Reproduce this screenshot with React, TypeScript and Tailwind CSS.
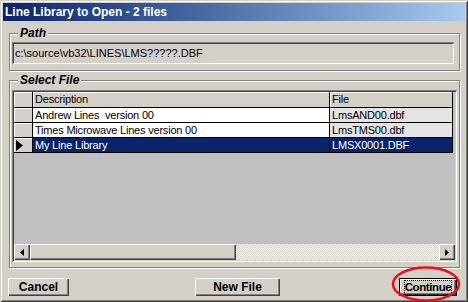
import { Fragment } from "react";

const raised =
  "shadow-[inset_1px_1px_0_#ffffff,inset_-1px_-1px_0_#404040,inset_-2px_-2px_0_#808080]";
const sunken =
  "shadow-[inset_1px_1px_0_#808080,inset_-1px_-1px_0_#ffffff,inset_2px_2px_0_#404040,inset_-2px_-2px_0_#d4d0c8]";
const etched = "border border-[#808080] shadow-[inset_1px_1px_0_#ffffff,1px_1px_0_#ffffff]";
const sans = "font-['Liberation_Sans',Arial,sans-serif]";

const rows = [
  { desc: "Andrew Lines  version 00", file: "LmsAND00.dbf", selected: false },
  { desc: "Times Microwave Lines version 00", file: "LmsTMS00.dbf", selected: false },
  { desc: "My Line Library", file: "LMSX0001.DBF", selected: true },
];

const GroupBox = ({ title, className, children }: { title: string; className: string; children: React.ReactNode }) => (
  <div className={`relative ml-[6px] w-[451px] ${etched} ${className}`}>
    <span className="absolute left-[8px] -top-[8px] bg-[#d4d0c8] px-[2px] text-[12px] leading-[14px] font-bold italic text-black">
      {title}
    </span>
    {children}
  </div>
);

const Arrow = ({ dir }: { dir: "left" | "right" }) => (
  <svg width="4" height="7" viewBox="0 0 4 7">
    {dir === "left" ? <polygon points="4,0 0,3.5 4,7" fill="#000" /> : <polygon points="0,0 4,3.5 0,7" fill="#000" />}
  </svg>
);

export default function App() {
  return (
    <div
      className={`relative flex h-[302px] w-[468px] flex-col bg-[#d4d0c8] p-[3px] ${sans} shadow-[inset_1px_1px_0_#d4d0c8,inset_-1px_-1px_0_#404040,inset_2px_2px_0_#ffffff,inset_-2px_-2px_0_#808080]`}
    >
      {/* caption */}
      <div className="flex h-[18px] items-center bg-linear-to-r from-[#0a246a] to-[#a6caf0] pl-[2px] text-[12px] font-bold text-white">
        Line Library to Open - 2 files
      </div>

      <GroupBox title="Path" className="mt-[12px] h-[38px] pl-[2px] pt-[8px]">
        <div className={`flex h-[22px] w-[442px] items-center pl-[3px] text-[11px] text-black ${sunken}`}>
          c:\source\vb32\LINES\LMS?????.DBF
        </div>
      </GroupBox>

      <GroupBox title="Select File" className="mt-[9px] h-[188px] pl-[2px] pt-[9px]">
        <div className={`flex h-[172px] w-[445px] flex-col bg-[#c0c0c0] p-[2px] text-[11px] ${sunken}`}>
          <div className="grid grid-cols-[19px_297px_123px] tracking-[-0.2px]">
            <div className="h-[16px] border-r border-b border-black bg-[#d4d0c8] shadow-[inset_1px_1px_0_#ffffff]" />
            <div className="flex h-[16px] items-center border-r border-b border-black bg-[#d4d0c8] pl-[2px] shadow-[inset_1px_1px_0_#ffffff]">
              Description
            </div>
            <div className="flex h-[16px] items-center border-r border-b border-black bg-[#d4d0c8] pl-[2px] shadow-[inset_1px_1px_0_#ffffff]">
              File
            </div>
            {rows.map((r) => (
              <Fragment key={r.file}>
                <div className="flex h-[15px] items-center border-r border-b border-black bg-[#d4d0c8] pl-[2px] shadow-[inset_1px_1px_0_#ffffff]">
                  {r.selected && (
                    <svg width="7" height="11" viewBox="0 0 7 11">
                      <polygon points="0,0 7,5.5 0,11" fill="#000" />
                    </svg>
                  )}
                </div>
                <div
                  className={`flex h-[15px] items-center whitespace-pre border-r border-b border-black pl-[2px] ${
                    r.selected ? "bg-[#0a246a] text-white" : "bg-white text-black"
                  }`}
                >
                  {r.desc}
                </div>
                <div
                  className={`flex h-[15px] items-center border-r border-b border-black pl-[2px] ${
                    r.selected ? "bg-[#0a246a] text-white" : "bg-[#e4e4e4] text-black"
                  }`}
                >
                  {r.file}
                </div>
              </Fragment>
            ))}
          </div>
          <div className="flex-1" />
          {/* horizontal scrollbar */}
          <div className="flex h-[16px]">
            <div className={`flex w-[16px] items-center justify-center bg-[#d4d0c8] ${raised}`}>
              <Arrow dir="left" />
            </div>
            <div className={`w-[206px] bg-[#d4d0c8] ${raised}`} />
            <div className="flex-1 bg-[repeating-conic-gradient(#ffffff_0%_25%,#d4d0c8_0%_50%)] bg-[length:2px_2px]" />
            <div className={`flex w-[16px] items-center justify-center bg-[#d4d0c8] ${raised}`}>
              <Arrow dir="right" />
            </div>
          </div>
        </div>
      </GroupBox>

      <div className="mt-[10px] flex pl-[5px] pr-[8px] text-[12px] font-bold text-black">
        <div className={`flex h-[18px] w-[61px] items-center justify-center bg-[#d4d0c8] ${raised}`}>Cancel</div>
        <div className={`ml-[126px] flex h-[18px] w-[85px] items-center justify-center bg-[#d4d0c8] ${raised}`}>
          New File
        </div>
        <div className="ml-auto flex h-[18px] w-[58px] items-center justify-center border border-black bg-[#d4d0c8]">
          <div className={`flex h-full w-full items-center justify-center ${raised}`}>
            <span className="text-[11.5px] leading-[13px] tracking-[-0.4px] outline-1 outline-dotted outline-black">
              Continue
            </span>
          </div>
        </div>
      </div>

      {/* red annotation ring */}
      <svg className="absolute left-[390px] top-[265px]" width="74" height="38" viewBox="0 0 74 38">
        <ellipse cx="36" cy="19" rx="33" ry="16.5" fill="none" stroke="#e8101a" strokeWidth="2.5" />
      </svg>
    </div>
  );
}
